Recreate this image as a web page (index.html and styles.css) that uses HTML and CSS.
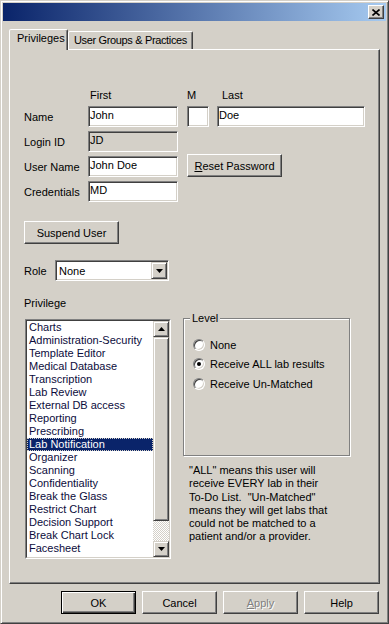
FILE: index.html
```html
<!DOCTYPE html>
<html lang="en">
<head>
    <meta charset="UTF-8">
    <title>User Properties</title>
    <link rel="stylesheet" href="styles.css">
</head>
<body>
    <div class="window">
        <div class="titlebar">
            <span class="close">
                <svg width="8" height="7" viewBox="0 0 8 7"><path d="M0.5 0.5 L7.5 6.5 M7.5 0.5 L0.5 6.5" stroke="#000" stroke-width="1.6" fill="none"/></svg>
            </span>
        </div>

        <div class="client">
            <div class="tabs">
                <div class="tab active">Privileges</div>
                <div class="tab groups">User Groups &amp; Practices</div>
            </div>

            <div class="panel">
                <!-- name / login block -->
                <div class="name-grid">
                    <span class="head col-first">First</span>
                    <span class="head col-m">M</span>
                    <span class="head col-last">Last</span>

                    <span class="lbl">Name</span>
                    <div class="field col-first">John</div>
                    <div class="field col-m"></div>
                    <div class="field col-last">Doe</div>

                    <span class="lbl">Login ID</span>
                    <div class="field col-first readonly">JD</div>

                    <span class="lbl">User Name</span>
                    <div class="field col-first">John Doe</div>
                    <button class="btn reset"><u>R</u>eset Password</button>

                    <span class="lbl">Credentials</span>
                    <div class="field col-first">MD</div>
                </div>

                <button class="btn suspend">Suspend User</button>

                <div class="role-row">
                    <span class="role-lbl">Role</span>
                    <div class="select">
                        <span class="select-text">None</span>
                        <span class="select-btn">
                            <svg width="7" height="4" viewBox="0 0 7 4"><path d="M0 0 H7 L3.5 4 Z" fill="#000"/></svg>
                        </span>
                    </div>
                </div>

                <div class="priv-lbl">Privilege</div>

                <div class="lower">
                    <div class="list">
                        <div class="list-inner">
                            <div class="items">
                                <div class="item">Charts</div>
                                <div class="item">Administration-Security</div>
                                <div class="item">Template Editor</div>
                                <div class="item">Medical Database</div>
                                <div class="item">Transcription</div>
                                <div class="item">Lab Review</div>
                                <div class="item">External DB access</div>
                                <div class="item">Reporting</div>
                                <div class="item">Prescribing</div>
                                <div class="item selected">Lab Notification</div>
                                <div class="item">Organizer</div>
                                <div class="item">Scanning</div>
                                <div class="item">Confidentiality</div>
                                <div class="item">Break the Glass</div>
                                <div class="item">Restrict Chart</div>
                                <div class="item">Decision Support</div>
                                <div class="item">Break Chart Lock</div>
                                <div class="item">Facesheet</div>
                                <div class="item">Preference Manager Maint</div>
                            </div>
                            <div class="scrollbar">
                                <span class="sb-btn">
                                    <svg width="7" height="4" viewBox="0 0 7 4"><path d="M3.5 0 L7 4 H0 Z" fill="#000"/></svg>
                                </span>
                                <span class="thumb"></span>
                                <span class="track"></span>
                                <span class="sb-btn">
                                    <svg width="7" height="4" viewBox="0 0 7 4"><path d="M0 0 H7 L3.5 4 Z" fill="#000"/></svg>
                                </span>
                            </div>
                        </div>
                    </div>

                    <div class="right-col">
                        <div class="level">
                            <span class="legend">Level</span>
                            <div class="radio-row"><span class="radio"></span><span>None</span></div>
                            <div class="radio-row"><span class="radio on"></span><span>Receive ALL lab results</span></div>
                            <div class="radio-row"><span class="radio"></span><span>Receive Un-Matched</span></div>
                        </div>
                        <div class="note">
                            "ALL" means this user will<br>
                            receive EVERY lab in their<br>
                            To-Do List.&nbsp; "Un-Matched"<br>
                            means they will get labs that<br>
                            could not be matched to a<br>
                            patient and/or a provider.
                        </div>
                    </div>
                </div>
            </div>

            <div class="footer">
                <button class="btn wide default">OK</button>
                <button class="btn wide">Cancel</button>
                <button class="btn wide disabled"><u>A</u>pply</button>
                <button class="btn wide">Help</button>
            </div>
        </div>
    </div>
</body>
</html>
```

FILE: styles.css
```css
body {
    margin: 0;
    font-family: "Liberation Sans", Arial, sans-serif;
    font-size: 11px;
    color: #000;
    background-color: #d4d0c8;
}
.window {
    width: 389px;
    height: 624px;
    box-sizing: border-box;
    padding: 2px;
    background-color: #d4d0c8;
    border: 1px solid;
    border-color: #d4d0c8 #404040 #404040 #d4d0c8;
    box-shadow: inset 1px 1px #fff, inset -1px -1px #808080;
}
.titlebar {
    height: 18px;
    background: linear-gradient(to right, #0a246a, #a6caf0);
    display: flex;
    justify-content: flex-end;
    align-items: center;
    padding-right: 2px;
}
.close {
    width: 16px;
    height: 14px;
    box-sizing: border-box;
    background-color: #d4d0c8;
    border: 1px solid;
    border-color: #fff #404040 #404040 #fff;
    box-shadow: inset -1px -1px #808080;
    display: flex;
    align-items: center;
    justify-content: center;
}
.client {
    padding: 8px 6px 0 6px;
}

/* tabs */
.tabs {
    display: flex;
    align-items: flex-end;
    height: 20px;
}
.tab {
    height: 18px;
    box-sizing: border-box;
    width: 125px;
    padding: 2px 0 0 5px;
    line-height: 13px;
    white-space: nowrap;
    background-color: #d4d0c8;
    border: 1px solid;
    border-bottom: none;
    border-color: #fff #404040 transparent #fff;
    box-shadow: inset -1px 0 #808080;
    border-radius: 2px 2px 0 0;
}
.tab.groups {
    letter-spacing: -0.35px;
}
.tab.active {
    width: 59px;
    height: 21px;
    margin-bottom: -1px;
    padding-left: 7px;
    position: relative;
    z-index: 1;
}
.panel {
    height: 535px;
    box-sizing: border-box;
    padding: 39px 0 0 14px;
    border: 1px solid;
    border-color: #fff #404040 #404040 #fff;
    box-shadow: inset -1px -1px #808080;
}

/* name block */
.name-grid {
    display: grid;
    grid-template-columns: 64px 90px 9px 22px 8px 148px;
    grid-template-rows: 13px 21px 21px 21px 21px;
    row-gap: 4px;
    align-items: center;
}
.head {
    line-height: 13px;
}
.col-first {
    grid-column: 2;
}
.col-m {
    grid-column: 4;
}
.col-last {
    grid-column: 6;
}
.head.col-first {
    padding-left: 2px;
}
.head.col-last {
    padding-left: 5px;
}
.lbl {
    grid-column: 1;
}
.field {
    height: 21px;
    box-sizing: border-box;
    background-color: #fff;
    padding-left: 1px;
    line-height: 16px;
    border: 1px solid;
    border-color: #808080 #fff #fff #808080;
    box-shadow: inset 1px 1px #404040, inset -1px -1px #d4d0c8;
    white-space: nowrap;
}
.field.readonly {
    background-color: #d4d0c8;
}

/* buttons */
.btn {
    box-sizing: border-box;
    height: 23px;
    padding: 0;
    font: inherit;
    color: #000;
    background-color: #d4d0c8;
    border: 1px solid;
    border-color: #fff #404040 #404040 #fff;
    box-shadow: inset -1px -1px #808080;
    display: flex;
    align-items: center;
    justify-content: center;
}
.btn.reset {
    grid-column: 4 / span 3;
    justify-self: start;
    width: 95px;
    margin-top: -2px;
}
.btn.suspend {
    width: 95px;
    margin-top: 19px;
}
.btn.wide {
    width: 75px;
}
.btn.default {
    border-color: #000;
    box-shadow: inset 1px 1px #fff, inset -1px -1px #404040, inset -2px -2px #808080;
}
.btn.disabled {
    color: #808080;
    text-shadow: 1px 1px #fff;
}

/* role */
.role-row {
    display: flex;
    align-items: center;
    margin-top: 16px;
}
.role-lbl {
    width: 31px;
}
.select {
    width: 114px;
    height: 21px;
    box-sizing: border-box;
    display: flex;
    align-items: center;
    justify-content: space-between;
    background-color: #fff;
    border: 1px solid;
    border-color: #808080 #fff #fff #808080;
    box-shadow: inset 1px 1px #404040, inset -1px -1px #d4d0c8;
    padding: 1px;
}
.select-text {
    padding-left: 2px;
}
.select-btn {
    width: 16px;
    height: 17px;
    box-sizing: border-box;
    background-color: #d4d0c8;
    border: 1px solid;
    border-color: #d4d0c8 #404040 #404040 #d4d0c8;
    box-shadow: inset 1px 1px #fff, inset -1px -1px #808080;
    display: flex;
    align-items: center;
    justify-content: center;
}
.priv-lbl {
    margin-top: 16px;
    line-height: 13px;
}

/* list + level */
.lower {
    display: flex;
    align-items: flex-start;
    margin-top: 9px;
}
.list {
    width: 146px;
    height: 240px;
    margin-left: 1px;
    box-sizing: border-box;
    border: 1px solid;
    border-color: #808080 #fff #fff #808080;
}
.list-inner {
    height: 100%;
    box-sizing: border-box;
    display: flex;
    background-color: #fff;
    border: 1px solid;
    border-color: #404040 #d4d0c8 #d4d0c8 #404040;
}
.items {
    flex: 1;
    overflow: hidden;
    color: #0c0c3c;
}
.item {
    height: 13px;
    line-height: 13px;
    padding-left: 2px;
    white-space: nowrap;
}
.item.selected {
    background-color: #0a246a;
    color: #fff;
    outline: 1px dotted #d4d0c8;
    outline-offset: -1px;
}
.scrollbar {
    width: 16px;
    display: flex;
    flex-direction: column;
}
.sb-btn, .thumb {
    box-sizing: border-box;
    background-color: #d4d0c8;
    border: 1px solid;
    border-color: #d4d0c8 #404040 #404040 #d4d0c8;
    box-shadow: inset 1px 1px #fff, inset -1px -1px #808080;
}
.sb-btn {
    height: 16px;
    display: flex;
    align-items: center;
    justify-content: center;
}
.thumb {
    height: 184px;
}
.track {
    flex: 1;
    background: repeating-conic-gradient(#fff 0 25%, #d4d0c8 0 50%) 0 0 / 2px 2px;
}
.right-col {
    margin-left: 12px;
    margin-top: -1px;
}
.level {
    position: relative;
    width: 167px;
    height: 138px;
    box-sizing: border-box;
    padding: 16px 0 0 9px;
    border: 1px solid #808080;
    box-shadow: inset 1px 1px #fff, 1px 1px #fff;
}
.legend {
    position: absolute;
    top: -7px;
    left: 6px;
    padding: 0 2px;
    line-height: 13px;
    background-color: #d4d0c8;
}
.radio-row {
    height: 19.5px;
    display: flex;
    align-items: center;
}
.radio {
    width: 12px;
    height: 12px;
    box-sizing: border-box;
    margin-right: 5px;
    border-radius: 50%;
    background-color: #fff;
    border: 1px solid;
    border-color: #808080 #fff #fff #808080;
    box-shadow: inset 1px 1px #404040, inset -1px -1px #d4d0c8;
    display: flex;
    align-items: center;
    justify-content: center;
}
.radio.on::after {
    content: "";
    width: 4px;
    height: 4px;
    border-radius: 50%;
    background-color: #000;
}
.note {
    margin-top: 8px;
    padding-left: 6px;
    line-height: 13.3px;
    white-space: nowrap;
}

/* dialog buttons */
.footer {
    display: flex;
    justify-content: flex-end;
    gap: 6px;
    margin-top: 7px;
    padding-right: 1px;
}
```
